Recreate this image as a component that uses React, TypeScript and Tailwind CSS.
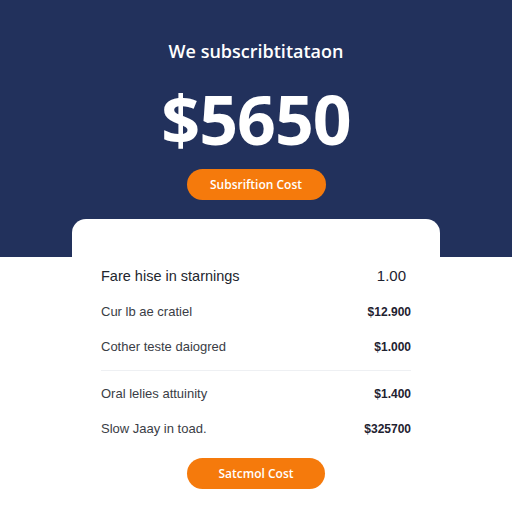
import React from 'react';

interface Row {
    label: string;
    value: string;
}

const topRows: Row[] = [
    { label: 'Cur lb ae cratiel', value: '$12.900' },
    { label: 'Cother teste daiogred', value: '$1.000' },
];

const bottomRows: Row[] = [
    { label: 'Oral lelies attuinity', value: '$1.400' },
    { label: 'Slow Jaay in toad.', value: '$325700' },
];

function CostRow({ row }: { row: Row }) {
    return (
        <div className="flex h-[35px] items-center justify-between font-['Liberation_Sans',sans-serif]">
            <span className="text-[13px] text-[#3a3d45]">{row.label}</span>
            <span className="text-[12px] font-bold text-[#1e2230]">{row.value}</span>
        </div>
    );
}

export default function App() {
    return (
        <div className="min-h-[512px] w-[512px] overflow-hidden bg-white font-['Open_Sans',sans-serif]">
            {/* header */}
            <section className="flex h-[257px] flex-col items-center bg-[#22315c] pt-[39px]">
                <h1 className="text-[18px] font-semibold leading-[24px] text-white">We subscribtitataon</h1>
                <div className="mt-[22px] text-[68px] font-bold leading-[68px] tracking-[-1px] text-white">$5650</div>
                <button className="mt-[16px] h-[31px] w-[139px] rounded-full bg-[#f57a0c] text-[12px] font-semibold text-white">
                    Subsriftion Cost
                </button>
            </section>

            {/* card */}
            <section className="mx-auto -mt-[38px] w-[368px] rounded-t-[14px] bg-white px-[29px] pb-[20px] pt-[40px]">
                <div className="flex h-[35px] items-center justify-between font-['Liberation_Sans',sans-serif]">
                    <span className="text-[14.5px] text-[#23262e]">Fare hise in starnings</span>
                    <span className="pr-[5px] text-[15px] text-[#1e2230]">1.00</span>
                </div>
                {topRows.map((row) => (
                    <CostRow key={row.label} row={row} />
                ))}
                <div className="mb-[5px] mt-[6px] border-t border-[#eef0f3]" />
                {bottomRows.map((row) => (
                    <CostRow key={row.label} row={row} />
                ))}
                <div className="mt-[12px] flex justify-center">
                    <button className="h-[31px] w-[138px] rounded-full bg-[#f57a0c] text-[12px] font-semibold text-white">
                        Satcmol Cost
                    </button>
                </div>
            </section>
        </div>
    );
}
